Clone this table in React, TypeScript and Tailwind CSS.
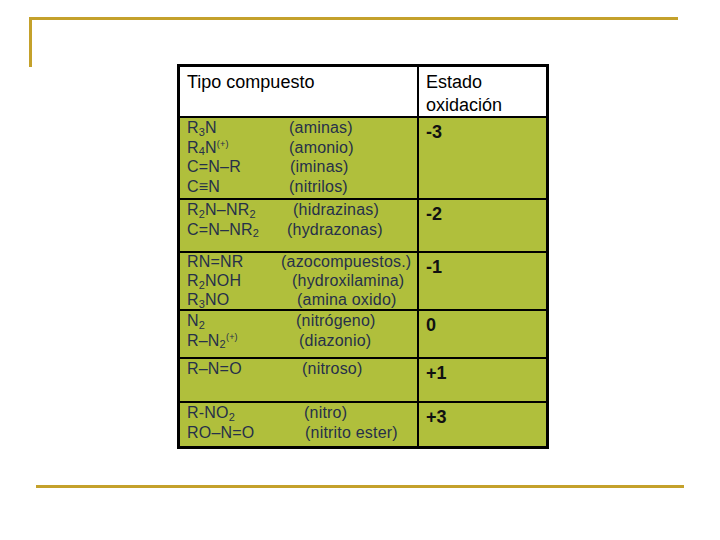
import React from 'react';

type Line = { f: React.ReactNode; w: number; name: string };
type Row = { h: number; lines: Line[]; value: string; lead?: string };

const sub = (s: string) => <sub className="text-[11px]">{s}</sub>;
const plus = <sup className="text-[9px] top-[-0.6em]">(+)</sup>;

const rows: Row[] = [
  {
    h: 80,
    value: '-3',
    lines: [
      { f: <>R{sub('3')}N</>, w: 102, name: '(aminas)' },
      { f: <>R{sub('4')}N{plus}</>, w: 102, name: '(amonio)' },
      { f: 'C=N–R', w: 103, name: '(iminas)' },
      { f: 'C≡N', w: 102, name: '(nitrilos)' },
    ],
  },
  {
    h: 51,
    value: '-2',
    lines: [
      { f: <>R{sub('2')}N–NR{sub('2')}</>, w: 106, name: '(hidrazinas)' },
      { f: <>C=N–NR{sub('2')}</>, w: 100, name: '(hydrazonas)' },
    ],
  },
  {
    h: 56,
    value: '-1',
    lead: 'leading-[19px] -mt-[1px]',
    lines: [
      { f: 'RN=NR', w: 94, name: '(azocompuestos.)' },
      { f: <>R{sub('2')}NOH</>, w: 105, name: '(hydroxilamina)' },
      { f: <>R{sub('3')}NO</>, w: 110, name: '(amina oxido)' },
    ],
  },
  {
    h: 46,
    value: '0',
    lines: [
      { f: <>N{sub('2')}</>, w: 109, name: '(nitrógeno)' },
      { f: <>R–N{sub('2')}{plus}</>, w: 112, name: '(diazonio)' },
    ],
  },
  {
    h: 42,
    value: '+1',
    lines: [{ f: 'R–N=O', w: 115, name: '(nitroso)' }],
  },
  {
    h: 43,
    value: '+3',
    lines: [
      { f: <>R-NO{sub('2')}</>, w: 117, name: '(nitro)' },
      { f: 'RO–N=O', w: 118, name: '(nitrito ester)' },
    ],
  },
];

export default function App() {
  return (
    <div className="w-[720px] h-[540px] bg-white overflow-hidden font-['Liberation_Sans',Arial,sans-serif]">
      <div className="pt-[17px] pl-[29px]">
        <div className="w-[649px] h-[50px] border-t-[3px] border-l-[3px] border-[#c4a12b]" />
      </div>

      <div className="-mt-[3px] ml-[177px] w-[372px] bg-black p-[3px] grid grid-cols-[237px_127px] gap-[2px]">
        <div className="h-[49px] bg-white pl-[7px] pt-[4px] text-[18px] leading-[23px] text-black">
          Tipo compuesto
        </div>
        <div className="h-[49px] bg-white pl-[7px] pt-[4px] text-[18px] leading-[23px] text-black">
          Estado
          <br />
          oxidación
        </div>

        {rows.map((r, i) => (
          <React.Fragment key={i}>
            <div
              style={{ height: r.h }}
              className="bg-[#b0bf3c] pl-[7px] text-[16px] text-[#26304a]"
            >
              <div className={r.lead ?? 'leading-[19.5px]'}>
                {r.lines.map((l, j) => (
                  <div key={j} className="flex whitespace-nowrap tracking-[0.2px]">
                    <span className="shrink-0" style={{ width: l.w }}>
                      {l.f}
                    </span>
                    <span>{l.name}</span>
                  </div>
                ))}
              </div>
            </div>
            <div
              style={{ height: r.h }}
              className="bg-[#b0bf3c] pl-[7px] pt-[4px] text-[18px] leading-[20px] font-bold text-[#111]"
            >
              {r.value}
            </div>
          </React.Fragment>
        ))}
      </div>

      <div className="mt-[36px] ml-[36px] w-[648px] h-[3px] bg-[#c4a12b]" />
    </div>
  );
}
